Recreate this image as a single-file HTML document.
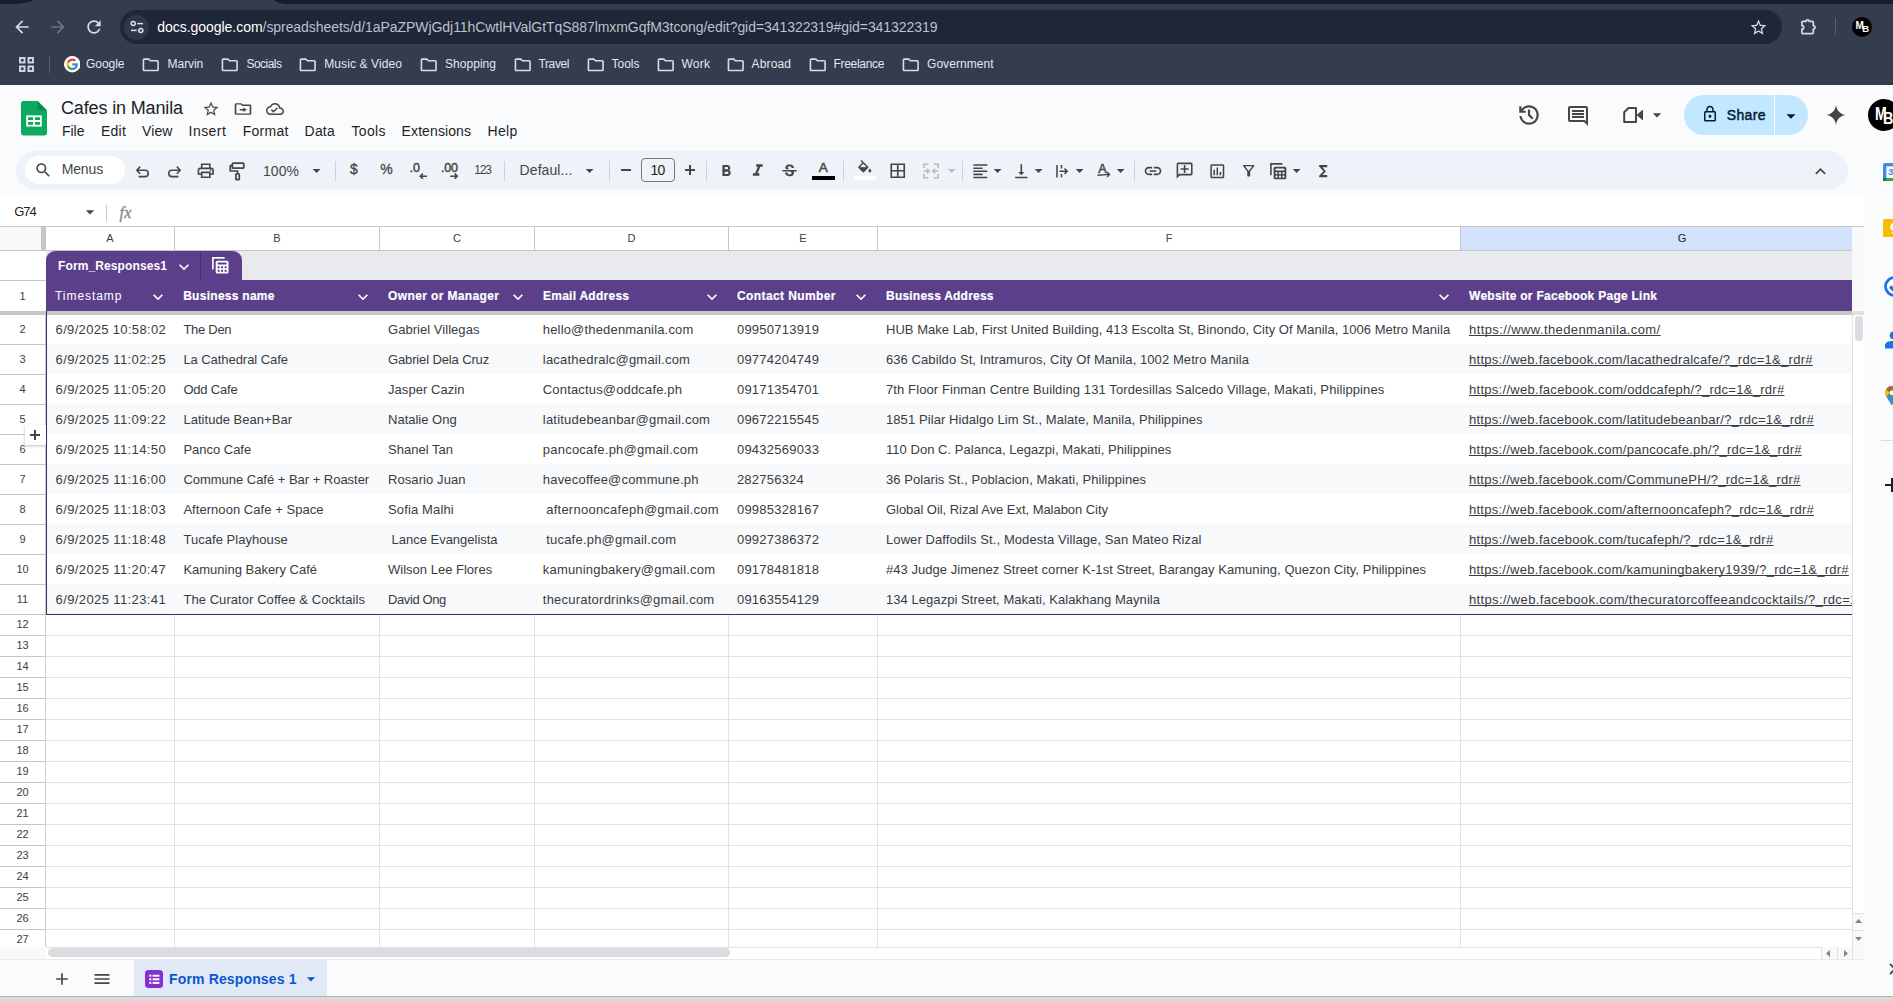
<!DOCTYPE html>
<html lang="en"><head><meta charset="utf-8"><title>Cafes in Manila - Google Sheets</title>
<style>
html,body{margin:0;padding:0}
body{width:1893px;height:1001px;overflow:hidden;position:relative;background:#f9fbfd;font-family:"Liberation Sans",sans-serif}
.t{position:absolute;white-space:nowrap}
svg{display:block}
a{color:inherit}
</style></head>
<body>
<!-- browser chrome -->
<div style="position:absolute;left:0px;top:0px;width:1893px;height:85px;background:#343c4d;"></div>
<div style="position:absolute;left:0px;top:80px;width:1893px;height:2px;background:#354156;"></div>
<div style="position:absolute;left:0px;top:82px;width:1893px;height:1px;background:#2f384a;"></div>
<div style="position:absolute;left:0px;top:83px;width:1893px;height:2px;background:#373b48;"></div>
<div style="position:absolute;left:0px;top:0px;width:1893px;height:4px;background:#171d2c;"></div>
<svg style="position:absolute;left:0;top:0" width="300" height="6" viewBox="0 0 300 6"><path fill="#343c4d" d="M0 6V4.6C14 4.6 27 3.4 34 0H274c3 2.6 7 4 14 4h12v2z"/></svg>
<svg style="position:absolute;left:12px;top:17px;" width="20" height="20" viewBox="0 0 24 24" ><path fill="#d6dbe4" d="M20 11H7.83l5.59-5.59L12 4l-8 8 8 8 1.41-1.41L7.83 13H20v-2z"/></svg>
<svg style="position:absolute;left:47.5px;top:17px;" width="20" height="20" viewBox="0 0 24 24" ><path fill="#6c7484" d="M12 4l-1.41 1.41L16.17 11H4v2h12.17l-5.58 5.59L12 20l8-8z"/></svg>
<svg style="position:absolute;left:84px;top:17px;" width="20" height="20" viewBox="0 0 24 24" ><path fill="#d6dbe4" d="M17.65 6.35C16.2 4.9 14.21 4 12 4c-4.42 0-7.99 3.58-7.99 8s3.57 8 7.99 8c3.73 0 6.84-2.55 7.73-6h-2.08c-.82 2.33-3.04 4-5.65 4-3.31 0-6-2.69-6-6s2.69-6 6-6c1.66 0 3.14.69 4.22 1.78L13 11h7V4l-2.35 2.35z"/></svg>
<div style="position:absolute;left:120px;top:10px;width:1662px;height:34px;background:#1f2637;border-radius:17px"></div>
<div style="position:absolute;left:124px;top:14.5px;width:25px;height:25px;background:#2f3749;border-radius:50%"></div>
<svg style="position:absolute;left:128.5px;top:19px" width="16" height="16" viewBox="0 0 16 16" fill="none" stroke="#dfe3ea" stroke-width="1.5"><circle cx="4.2" cy="4.6" r="2"/><path d="M8.3 4.6H14"/><circle cx="11.8" cy="11.4" r="2"/><path d="M2 11.4H7.7"/></svg>
<span class="t" id="turl" style="left:157.3px;top:17.6px;font-size:14px;line-height:18px;color:#bcc1cc;letter-spacing:-0.06px"><span style="color:#fff;letter-spacing:-0.04px">docs.google.com</span>/spreadsheets/d/1aPaZPWjGdj11hCwtlHValGtTqS887lmxmGqfM3tcong/edit?gid=341322319#gid=341322319</span>
<svg style="position:absolute;left:1749px;top:17.5px;" width="19" height="19" viewBox="0 0 24 24" ><path fill="#d6dbe4" d="M22 9.24l-7.19-.62L12 2 9.19 8.63 2 9.24l5.46 4.73L5.82 21 12 17.27 18.18 21l-1.63-7.03L22 9.24zM12 15.4l-3.76 2.27 1-4.28-3.32-2.88 4.38-.38L12 6.1l1.71 4.04 4.38.38-3.32 2.88 1 4.28L12 15.4z"/></svg>
<svg style="position:absolute;left:1800px;top:17.5px" width="18" height="17" viewBox="0 0 18 17" fill="none" stroke="#d6dbe4" stroke-width="1.7" stroke-linejoin="round"><path d="M1.9 4.4a1 1 0 0 1 1-1H6a1.6 1.6 0 0 1 3.2 0H12.3a1 1 0 0 1 1 1V7.6a1.7 1.7 0 0 1 0 3.4V14.6a1 1 0 0 1-1 1H2.9a1 1 0 0 1-1-1V11.2a1.8 1.8 0 0 0 0-3.6z"/></svg>
<div style="position:absolute;left:1834.5px;top:18px;width:1.5px;height:17px;background:#566076;"></div>
<div style="position:absolute;left:1852px;top:17px;width:20px;height:20px;background:#000;border-radius:50%"></div>
<span class="t" style="top:18.8px;font-size:10px;line-height:13px;color:#fff;font-weight:700;left:1855.5px;">M</span>
<span class="t" style="top:23.0px;font-size:9.5px;line-height:12px;color:#fff;font-weight:700;left:1862.3px;">B</span>
<svg style="position:absolute;left:18.5px;top:56.5px" width="15" height="15" viewBox="0 0 15 15" fill="none" stroke="#d6dbe4" stroke-width="1.9"><rect x="1" y="1" width="4.5" height="4.5"/><rect x="9.5" y="1" width="4.5" height="4.5"/><rect x="1" y="9.5" width="4.5" height="4.5"/><rect x="9.5" y="9.5" width="4.5" height="4.5"/></svg>
<div style="position:absolute;left:48.5px;top:56px;width:1px;height:17px;background:#566076;"></div>
<svg style="position:absolute;left:63.5px;top:56px" width="16.5" height="16.5" viewBox="0 0 48 48"><circle cx="24" cy="24" r="24" fill="#fff"/><g transform="translate(7 7) scale(.71)"><path fill="#EA4335" d="M24 9.5c3.54 0 6.71 1.22 9.21 3.6l6.85-6.85C35.9 2.38 30.47 0 24 0 14.62 0 6.51 5.38 2.56 13.22l7.98 6.19C12.43 13.72 17.74 9.5 24 9.5z"/><path fill="#4285F4" d="M46.98 24.55c0-1.57-.15-3.09-.38-4.55H24v9.02h12.94c-.58 2.96-2.26 5.48-4.78 7.18l7.73 6c4.51-4.18 7.09-10.36 7.09-17.65z"/><path fill="#FBBC05" d="M10.53 28.59c-.48-1.45-.76-2.99-.76-4.59s.27-3.14.76-4.59l-7.98-6.19C.92 16.46 0 20.12 0 24c0 3.88.92 7.54 2.56 10.78l7.97-6.19z"/><path fill="#34A853" d="M24 48c6.48 0 11.93-2.13 15.89-5.81l-7.73-6c-2.15 1.45-4.92 2.3-8.16 2.3-6.26 0-11.57-4.22-13.47-9.91l-7.98 6.19C6.51 42.62 14.62 48 24 48z"/></g></svg>
<span class="t" style="top:56.3px;font-size:12px;line-height:16px;color:#e3e7ee;letter-spacing:-0.042px;left:86px;">Google</span>
<svg style="position:absolute;left:141.3px;top:54.5px;" width="19.5" height="19.5" viewBox="0 0 24 24" ><path fill="#d6dbe4" d="M9.17 6l2 2H20v10H4V6h5.17M10 4H4c-1.1 0-1.99.9-1.99 2L2 18c0 1.1.9 2 2 2h16c1.1 0 2-.9 2-2V8c0-1.1-.9-2-2-2h-8l-2-2z"/></svg>
<span class="t" style="top:56.3px;font-size:12px;line-height:16px;color:#e3e7ee;letter-spacing:-0.062px;left:167.6px;">Marvin</span>
<svg style="position:absolute;left:220.3px;top:54.5px;" width="19.5" height="19.5" viewBox="0 0 24 24" ><path fill="#d6dbe4" d="M9.17 6l2 2H20v10H4V6h5.17M10 4H4c-1.1 0-1.99.9-1.99 2L2 18c0 1.1.9 2 2 2h16c1.1 0 2-.9 2-2V8c0-1.1-.9-2-2-2h-8l-2-2z"/></svg>
<span class="t" style="top:56.3px;font-size:12px;line-height:16px;color:#e3e7ee;letter-spacing:-0.516px;left:246.4px;">Socials</span>
<svg style="position:absolute;left:298.0px;top:54.5px;" width="19.5" height="19.5" viewBox="0 0 24 24" ><path fill="#d6dbe4" d="M9.17 6l2 2H20v10H4V6h5.17M10 4H4c-1.1 0-1.99.9-1.99 2L2 18c0 1.1.9 2 2 2h16c1.1 0 2-.9 2-2V8c0-1.1-.9-2-2-2h-8l-2-2z"/></svg>
<span class="t" style="top:56.3px;font-size:12px;line-height:16px;color:#e3e7ee;letter-spacing:0.109px;left:324.2px;">Music &amp; Video</span>
<svg style="position:absolute;left:419.1px;top:54.5px;" width="19.5" height="19.5" viewBox="0 0 24 24" ><path fill="#d6dbe4" d="M9.17 6l2 2H20v10H4V6h5.17M10 4H4c-1.1 0-1.99.9-1.99 2L2 18c0 1.1.9 2 2 2h16c1.1 0 2-.9 2-2V8c0-1.1-.9-2-2-2h-8l-2-2z"/></svg>
<span class="t" style="top:56.3px;font-size:12px;line-height:16px;color:#e3e7ee;letter-spacing:0.039px;left:445px;">Shopping</span>
<svg style="position:absolute;left:512.8px;top:54.5px;" width="19.5" height="19.5" viewBox="0 0 24 24" ><path fill="#d6dbe4" d="M9.17 6l2 2H20v10H4V6h5.17M10 4H4c-1.1 0-1.99.9-1.99 2L2 18c0 1.1.9 2 2 2h16c1.1 0 2-.9 2-2V8c0-1.1-.9-2-2-2h-8l-2-2z"/></svg>
<span class="t" style="top:56.3px;font-size:12px;line-height:16px;color:#e3e7ee;letter-spacing:-0.38px;left:538.5px;">Travel</span>
<svg style="position:absolute;left:585.8px;top:54.5px;" width="19.5" height="19.5" viewBox="0 0 24 24" ><path fill="#d6dbe4" d="M9.17 6l2 2H20v10H4V6h5.17M10 4H4c-1.1 0-1.99.9-1.99 2L2 18c0 1.1.9 2 2 2h16c1.1 0 2-.9 2-2V8c0-1.1-.9-2-2-2h-8l-2-2z"/></svg>
<span class="t" style="top:56.3px;font-size:12px;line-height:16px;color:#e3e7ee;letter-spacing:-0.006px;left:611.5px;">Tools</span>
<svg style="position:absolute;left:655.8px;top:54.5px;" width="19.5" height="19.5" viewBox="0 0 24 24" ><path fill="#d6dbe4" d="M9.17 6l2 2H20v10H4V6h5.17M10 4H4c-1.1 0-1.99.9-1.99 2L2 18c0 1.1.9 2 2 2h16c1.1 0 2-.9 2-2V8c0-1.1-.9-2-2-2h-8l-2-2z"/></svg>
<span class="t" style="top:56.3px;font-size:12px;line-height:16px;color:#e3e7ee;letter-spacing:0.235px;left:681.5px;">Work</span>
<svg style="position:absolute;left:725.8px;top:54.5px;" width="19.5" height="19.5" viewBox="0 0 24 24" ><path fill="#d6dbe4" d="M9.17 6l2 2H20v10H4V6h5.17M10 4H4c-1.1 0-1.99.9-1.99 2L2 18c0 1.1.9 2 2 2h16c1.1 0 2-.9 2-2V8c0-1.1-.9-2-2-2h-8l-2-2z"/></svg>
<span class="t" style="top:56.3px;font-size:12px;line-height:16px;color:#e3e7ee;letter-spacing:0.161px;left:751.5px;">Abroad</span>
<svg style="position:absolute;left:807.8px;top:54.5px;" width="19.5" height="19.5" viewBox="0 0 24 24" ><path fill="#d6dbe4" d="M9.17 6l2 2H20v10H4V6h5.17M10 4H4c-1.1 0-1.99.9-1.99 2L2 18c0 1.1.9 2 2 2h16c1.1 0 2-.9 2-2V8c0-1.1-.9-2-2-2h-8l-2-2z"/></svg>
<span class="t" style="top:56.3px;font-size:12px;line-height:16px;color:#e3e7ee;letter-spacing:-0.297px;left:833.5px;">Freelance</span>
<svg style="position:absolute;left:901.3px;top:54.5px;" width="19.5" height="19.5" viewBox="0 0 24 24" ><path fill="#d6dbe4" d="M9.17 6l2 2H20v10H4V6h5.17M10 4H4c-1.1 0-1.99.9-1.99 2L2 18c0 1.1.9 2 2 2h16c1.1 0 2-.9 2-2V8c0-1.1-.9-2-2-2h-8l-2-2z"/></svg>
<span class="t" style="top:56.3px;font-size:12px;line-height:16px;color:#e3e7ee;letter-spacing:0.051px;left:927px;">Government</span>
<!-- sheets header -->
<div style="position:absolute;left:0px;top:85px;width:1893px;height:1px;background:#ffffff;"></div>
<svg style="position:absolute;left:21px;top:101px" width="26" height="34.5" viewBox="0 0 26 34.5"><path fill="#0da960" d="M2.4 0H16.6L26 9.4V32.1A2.4 2.4 0 0 1 23.6 34.5H2.4A2.4 2.4 0 0 1 0 32.1V2.4A2.4 2.4 0 0 1 2.4 0z"/><path fill="#0a8a4c" d="M16.6 0L26 9.4H19A2.4 2.4 0 0 1 16.6 7z"/><path fill="#fff" d="M5.2 14.4H20.8V25.6H5.2z"/><path fill="#0da960" d="M7 16.2H12.1V19.1H7zM13.9 16.2H19V19.1H13.9zM7 20.9H12.1V23.8H7zM13.9 20.9H19V23.8H13.9z"/></svg>
<span class="t" style="top:96.5px;font-size:18px;line-height:23px;color:#1f1f1f;letter-spacing:-0.147px;left:61px;">Cafes in Manila</span>
<svg style="position:absolute;left:201.8px;top:99.7px;" width="18" height="18" viewBox="0 0 24 24" ><path fill="#444746" d="M22 9.24l-7.19-.62L12 2 9.19 8.63 2 9.24l5.46 4.73L5.82 21 12 17.27 18.18 21l-1.63-7.03L22 9.24zM12 15.4l-3.76 2.27 1-4.28-3.32-2.88 4.38-.38L12 6.1l1.71 4.04 4.38.38-3.32 2.88 1 4.28L12 15.4z"/></svg>
<svg style="position:absolute;left:233px;top:99px;transform:scaleY(.88)" width="20" height="20" viewBox="0 0 24 24" ><path fill="#444746" d="M20 6h-8l-2-2H4c-1.1 0-2 .9-2 2v12c0 1.1.9 2 2 2h16c1.1 0 2-.9 2-2V8c0-1.1-.9-2-2-2zm0 12H4V6h5.17l2 2H20v10zm-7.5-2l4-3-4-3v2H8v2h4.5v2z"/></svg>
<svg style="position:absolute;left:266px;top:100px;" width="18" height="18" viewBox="0 0 24 24" ><path fill="#444746" d="M19.35 10.04C18.67 6.59 15.64 4 12 4 9.11 4 6.6 5.64 5.35 8.04 2.34 8.36 0 10.91 0 14c0 3.31 2.69 6 6 6h13c2.76 0 5-2.24 5-5 0-2.64-2.05-4.78-4.65-4.96zM19 18H6c-2.21 0-4-1.79-4-4 0-2.05 1.53-3.76 3.56-3.97l1.07-.11.5-.95C8.08 7.14 9.94 6 12 6c2.62 0 4.88 1.86 5.39 4.43l.3 1.5 1.53.11c1.56.1 2.78 1.41 2.78 2.96 0 1.65-1.35 3-3 3zm-9-3.82l-2.09-2.09L6.5 13.5 10 17l6.01-6.01-1.41-1.41z"/></svg>
<span class="t" style="top:122.30000000000001px;font-size:14px;line-height:18px;color:#1f1f1f;letter-spacing:-0.02px;left:62px;">File</span>
<span class="t" style="top:122.30000000000001px;font-size:14px;line-height:18px;color:#1f1f1f;letter-spacing:0.22px;left:101px;">Edit</span>
<span class="t" style="top:122.30000000000001px;font-size:14px;line-height:18px;color:#1f1f1f;letter-spacing:0.099px;left:142px;">View</span>
<span class="t" style="top:122.30000000000001px;font-size:14px;line-height:18px;color:#1f1f1f;letter-spacing:0.435px;left:188.6px;">Insert</span>
<span class="t" style="top:122.30000000000001px;font-size:14px;line-height:18px;color:#1f1f1f;letter-spacing:0.271px;left:242.7px;">Format</span>
<span class="t" style="top:122.30000000000001px;font-size:14px;line-height:18px;color:#1f1f1f;letter-spacing:0.172px;left:304.6px;">Data</span>
<span class="t" style="top:122.30000000000001px;font-size:14px;line-height:18px;color:#1f1f1f;letter-spacing:0.278px;left:351.6px;">Tools</span>
<span class="t" style="top:122.30000000000001px;font-size:14px;line-height:18px;color:#1f1f1f;letter-spacing:0.1px;left:401.6px;">Extensions</span>
<span class="t" style="top:122.30000000000001px;font-size:14px;line-height:18px;color:#1f1f1f;letter-spacing:0.301px;left:487.5px;">Help</span>
<svg style="position:absolute;left:1515.8px;top:101.7px" width="26" height="26" viewBox="0 -960 960 960"><path fill="#444746" d="M480-120q-138 0-240.500-91.500T122-440h82q14 104 92.5 172T480-200q117 0 198.500-81.500T760-480q0-117-81.500-198.500T480-760q-69 0-129 32t-101 88h110v80H120v-240h80v94q51-64 124.500-99T480-840q75 0 140.500 28.500t114 77q48.500 48.500 77 114T840-480q0 75-28.500 140.500t-77 114q-48.500 48.500-114 77T480-120Zm112-192L440-464v-216h80v184l128 128-56 56Z"/></svg>
<svg style="position:absolute;left:1566px;top:104px;" width="24" height="24" viewBox="0 0 24 24" ><path fill="#444746" d="M21.99 4c0-1.1-.89-2-1.99-2H4c-1.1 0-2 .9-2 2v12c0 1.1.9 2 2 2h14l4 4-.01-18zM20 4v13.17L18.83 16H4V4h16zM6 12h12v2H6zm0-3h12v2H6zm0-3h12v2H6z"/></svg>
<svg style="position:absolute;left:1622px;top:106px" width="22" height="18" viewBox="0 0 22 18" fill="none" stroke="#444746" stroke-width="2" stroke-linejoin="round"><path d="M6.5 2H14V16H2.2V6.3z"/><path fill="#444746" stroke="none" d="M14.5 9L21 3.5V14.5z"/></svg>
<svg style="position:absolute;left:1647px;top:104.6px;" width="20" height="20" viewBox="0 0 24 24" ><path fill="#444746" d="M7 10l5 5 5-5z"/></svg>
<div style="position:absolute;left:1684px;top:95px;width:124px;height:40px;background:#c2e7ff;border-radius:20px"></div>
<div style="position:absolute;left:1774px;top:95px;width:1px;height:40px;background:#f9fbfd;"></div>
<svg style="position:absolute;left:1701px;top:105px;" width="18" height="18" viewBox="0 0 24 24" ><path fill="#001d35" d="M18 8h-1V6c0-2.76-2.24-5-5-5S7 3.24 7 6v2H6c-1.1 0-2 .9-2 2v10c0 1.1.9 2 2 2h12c1.1 0 2-.9 2-2V10c0-1.1-.9-2-2-2zM9 6c0-1.66 1.34-3 3-3s3 1.34 3 3v2H9V6zm9 14H6V10h12v10zm-6-3c1.1 0 2-.9 2-2s-.9-2-2-2-2 .9-2 2 .9 2 2 2z"/></svg>
<span class="t" style="top:106.0px;font-size:14px;line-height:18px;color:#001d35;letter-spacing:0.357px;-webkit-text-stroke:0.45px #001d35;left:1726.7px;">Share</span>
<svg style="position:absolute;left:1780.2px;top:104.8px;" width="22" height="22" viewBox="0 0 24 24" ><path fill="#001d35" d="M7 10l5 5 5-5z"/></svg>
<svg style="position:absolute;left:1826px;top:105px" width="20" height="20" viewBox="0 0 20 20"><path fill="#444746" d="M10 0C10.6 5.6 14.4 9.4 20 10C14.4 10.6 10.6 14.4 10 20C9.4 14.4 5.6 10.6 0 10C5.6 9.4 9.4 5.6 10 0z"/></svg>
<div style="position:absolute;left:1868px;top:99px;width:32px;height:32px;background:#000;border-radius:50%"></div>
<span class="t" style="top:101.3px;font-size:19px;line-height:25px;color:#fff;font-weight:700;transform:scaleX(.74);transform-origin:left center;left:1874.8px;">M</span>
<span class="t" style="top:107.6px;font-size:17px;line-height:22px;color:#fff;font-weight:700;transform:scaleX(.85);transform-origin:left center;left:1882.6px;">B</span>
<!-- toolbar -->
<div style="position:absolute;left:16px;top:151px;width:1832px;height:39px;background:#eef2f9;border-radius:20px"></div>
<div style="position:absolute;left:25px;top:156px;width:100px;height:28px;background:#fff;border-radius:14px"></div>
<svg style="position:absolute;left:33.5px;top:161px;" width="18.5" height="18.5" viewBox="0 0 24 24" ><path fill="#444746" d="M15.5 14h-.79l-.28-.27C15.41 12.59 16 11.11 16 9.5 16 5.91 13.09 3 9.5 3S3 5.91 3 9.5 5.91 16 9.5 16c1.61 0 3.09-.59 4.23-1.57l.27.28v.79l5 4.99L20.49 19l-4.99-5zm-6 0C7.01 14 5 11.99 5 9.5S7.01 5 9.5 5 14 7.01 14 9.5 11.99 14 9.5 14z"/></svg>
<span class="t" style="top:160.2px;font-size:14px;line-height:18px;color:#444746;letter-spacing:-0.131px;left:61.7px;">Menus</span>
<svg style="position:absolute;left:134.6px;top:164px" width="16" height="16" viewBox="0 0 16 16" fill="none" stroke="#444746" stroke-width="1.6" stroke-linejoin="round"><path d="M5.2 2.6L1.8 6.2L5.2 9.8"/><path d="M2.2 6.2H10a3.2 3.2 0 0 1 0 6.4H3.6"/></svg>
<svg style="position:absolute;left:166.2px;top:164px" width="16" height="16" viewBox="0 0 16 16" fill="none" stroke="#444746" stroke-width="1.6" stroke-linejoin="round"><path d="M10.8 2.6L14.2 6.2L10.8 9.8"/><path d="M13.8 6.2H6a3.2 3.2 0 0 0 0 6.4H12.4"/></svg>
<svg style="position:absolute;left:196.25px;top:161.25px;" width="19.5" height="19.5" viewBox="0 0 24 24" ><path fill="#444746" d="M19 8h-1V3H6v5H5c-1.66 0-3 1.34-3 3v6h4v4h12v-4h4v-6c0-1.66-1.34-3-3-3zM8 5h8v3H8V5zm8 12v2H8v-4h8v2zm2-2v-2H6v2H4v-4c0-.55.45-1 1-1h14c.55 0 1 .45 1 1v4h-2z M18 10.5a1 1 0 1 0 0 2 1 1 0 0 0 0-2z"/></svg>
<svg style="position:absolute;left:229.3px;top:162.3px" width="16" height="19" viewBox="0 0 16 19" fill="none" stroke="#444746" stroke-width="1.7" stroke-linejoin="round"><rect x="3.4" y="1.2" width="11.4" height="5" rx=".8"/><path d="M3.4 3.7H1.3V9H8.6V12"/><rect x="6.9" y="12" width="3.4" height="5.6" rx=".5"/></svg>
<span class="t" style="top:162.3px;font-size:14px;line-height:18px;color:#444746;letter-spacing:0.062px;left:263px;">100%</span>
<svg style="position:absolute;left:307.0px;top:160.9px;" width="19.2" height="19.2" viewBox="0 0 24 24" ><path fill="#444746" d="M7 10l5 5 5-5z"/></svg>
<div style="position:absolute;left:334.5px;top:161px;width:1px;height:20px;background:#cdd0d6;"></div>
<span class="t" style="top:160.3px;font-size:14px;line-height:18px;color:#444746;letter-spacing:-0.099px;-webkit-text-stroke:0.3px #444746;left:350px;">$</span>
<span class="t" style="top:160.3px;font-size:14px;line-height:18px;color:#444746;letter-spacing:-1.256px;-webkit-text-stroke:0.3px #444746;left:380.3px;">%</span>
<span class="t" style="top:160.0px;font-size:12.5px;line-height:16px;color:#444746;letter-spacing:0.062px;-webkit-text-stroke:0.45px #444746;left:409.5px;">.0</span>
<svg style="position:absolute;left:418.5px;top:172.6px" width="8.5" height="6.5" viewBox="0 0 8.5 6.5" fill="none" stroke="#444746" stroke-width="1.6"><path d="M8.3 3.2H1.4M3.9 .7L1.3 3.2L3.9 5.8"/></svg>
<span class="t" style="top:160.0px;font-size:12.5px;line-height:16px;color:#444746;letter-spacing:-0.192px;-webkit-text-stroke:0.45px #444746;left:441px;">.00</span>
<svg style="position:absolute;left:449.5px;top:172.6px" width="8.5" height="6.5" viewBox="0 0 8.5 6.5" fill="none" stroke="#444746" stroke-width="1.6"><path d="M.2 3.2H7.1M4.6 .7L7.2 3.2L4.6 5.8"/></svg>
<span class="t" style="top:161.6px;font-size:12px;line-height:16px;color:#444746;letter-spacing:-1.212px;left:474.3px;">123</span>
<div style="position:absolute;left:503.5px;top:161px;width:1px;height:20px;background:#cdd0d6;"></div>
<span class="t" style="top:161.2px;font-size:14px;line-height:18px;color:#444746;letter-spacing:0.069px;left:519.6px;">Defaul...</span>
<svg style="position:absolute;left:580.0px;top:160.9px;" width="19.2" height="19.2" viewBox="0 0 24 24" ><path fill="#444746" d="M7 10l5 5 5-5z"/></svg>
<div style="position:absolute;left:609px;top:161px;width:1px;height:20px;background:#cdd0d6;"></div>
<div style="position:absolute;left:621px;top:169px;width:10px;height:1.7px;background:#444746;"></div>
<div style="position:absolute;left:641px;top:158px;width:32px;height:22px;background:transparent;border:1px solid #747775;border-radius:4px"></div>
<span class="t" style="top:161.1px;font-size:14px;line-height:18px;color:#1f1f1f;letter-spacing:-0.578px;left:657.6px;transform:translateX(-50%);">10</span>
<div style="position:absolute;left:685px;top:169.2px;width:10px;height:1.7px;background:#444746;"></div>
<div style="position:absolute;left:689.15px;top:165px;width:1.7px;height:10px;background:#444746;"></div>
<div style="position:absolute;left:706px;top:161px;width:1px;height:20px;background:#cdd0d6;"></div>
<svg style="position:absolute;left:716.75px;top:161.55px;" width="18.5" height="18.5" viewBox="0 0 24 24" ><path fill="#444746" d="M15.6 10.79c.97-.67 1.65-1.77 1.65-2.79 0-2.26-1.75-4-4-4H7v14h7.04c2.09 0 3.71-1.7 3.71-3.79 0-1.52-.86-2.82-2.15-3.42zM10 6.5h3c.83 0 1.5.67 1.5 1.5s-.67 1.5-1.5 1.5h-3v-3zm3.5 9H10v-3h3.5c.83 0 1.5.67 1.5 1.5s-.67 1.5-1.5 1.5z"/></svg>
<svg style="position:absolute;left:748.25px;top:161.25px;" width="19.5" height="19.5" viewBox="0 0 24 24" ><path fill="#444746" d="M10 4v3h2.21l-3.42 8H6v3h8v-3h-2.21l3.42-8H18V4z"/></svg>
<svg style="position:absolute;left:780.3px;top:161.5px;" width="19" height="19" viewBox="0 0 24 24" ><path fill="#444746" d="M7.24 8.75c-.26-.48-.39-1.03-.39-1.67 0-.61.13-1.16.4-1.67.26-.5.63-.93 1.11-1.29.48-.35 1.05-.63 1.7-.83.66-.19 1.39-.29 2.18-.29.81 0 1.54.11 2.21.34.66.22 1.23.54 1.69.94.47.4.83.88 1.08 1.43.25.55.38 1.15.38 1.81h-3.01c0-.31-.05-.59-.15-.85-.09-.27-.24-.49-.44-.68-.2-.19-.45-.33-.75-.44-.3-.1-.66-.16-1.06-.16-.39 0-.74.04-1.03.13-.29.09-.53.21-.72.36-.19.16-.34.34-.44.55-.1.21-.15.43-.15.66 0 .48.25.88.74 1.21.38.25.77.48 1.41.7H7.39c-.05-.08-.11-.17-.15-.25zM21 12v-2H3v2h9.62c.18.07.4.14.55.2.37.17.66.34.87.51.21.17.35.36.43.57.07.2.11.43.11.69 0 .23-.05.45-.14.66-.09.2-.23.38-.42.53-.19.15-.42.26-.71.35-.29.08-.63.13-1.01.13-.43 0-.83-.04-1.18-.13s-.66-.23-.91-.42c-.25-.19-.45-.44-.59-.75-.14-.31-.25-.76-.25-1.21H6.4c0 .55.08 1.13.24 1.58.16.45.37.85.65 1.21.28.35.6.66.98.92.37.26.78.48 1.22.65.44.17.9.3 1.38.39.48.08.96.13 1.44.13.8 0 1.53-.09 2.18-.28s1.21-.45 1.67-.79c.46-.34.82-.77 1.07-1.27s.38-1.07.38-1.71c0-.6-.1-1.14-.31-1.61-.05-.11-.11-.23-.17-.33H21z"/></svg>
<span class="t" style="top:159.2px;font-size:13.5px;line-height:18px;color:#444746;-webkit-text-stroke:0.5px #444746;left:823.3px;transform:translateX(-50%);">A</span>
<div style="position:absolute;left:812px;top:176px;width:23px;height:4px;background:#000;"></div>
<div style="position:absolute;left:843px;top:161px;width:1px;height:20px;background:#cdd0d6;"></div>
<svg style="position:absolute;left:855.5px;top:159.5px;" width="17.5" height="17.5" viewBox="0 0 24 24" ><path fill="#444746" d="M16.56 8.94L7.62 0 6.21 1.41l2.38 2.38-5.15 5.15c-.59.59-.59 1.54 0 2.12l5.5 5.5c.29.29.68.44 1.06.44s.77-.15 1.06-.44l5.5-5.5c.59-.58.59-1.53 0-2.12zM5.21 10L10 5.21 14.79 10H5.21zM19 11.5s-2 2.17-2 3.5c0 1.1.9 2 2 2s2-.9 2-2c0-1.33-2-3.5-2-3.5z"/></svg>
<svg style="position:absolute;left:855.5px;top:159.5px" width="17.5" height="17.5" viewBox="0 0 24 24"><path fill="#444746" d="M4.4 10.4h11.2L10 16z"/></svg>
<div style="position:absolute;left:853.5px;top:176px;width:22.5px;height:4px;background:#fff;"></div>
<svg style="position:absolute;left:888.25px;top:161.25px;" width="19.5" height="19.5" viewBox="0 0 24 24" ><path fill="#444746" d="M3 3v18h18V3H3zm8 16H5v-6h6v6zm0-8H5V5h6v6zm8 8h-6v-6h6v6zm0-8h-6V5h6v6z"/></svg>
<svg style="position:absolute;left:923px;top:163px" width="16" height="16" viewBox="0 0 16 16" fill="none" stroke="#b9bcbb" stroke-width="1.6"><path d="M.8 5V1.2H5.4M10.6 1.2H15.2V5M15.2 11V14.8H10.6M5.4 14.8H.8V11"/><path d="M.8 8H6M4 5.8L6.2 8L4 10.2M15.2 8H10M12 5.8L9.8 8L12 10.2"/></svg>
<svg style="position:absolute;left:942.4px;top:160.9px;" width="19.2" height="19.2" viewBox="0 0 24 24" ><path fill="#b9bcbb" d="M7 10l5 5 5-5z"/></svg>
<div style="position:absolute;left:962px;top:161px;width:1px;height:20px;background:#cdd0d6;"></div>
<svg style="position:absolute;left:970.7px;top:161.89999999999998px;" width="18.6" height="18.6" viewBox="0 0 24 24" ><path fill="#444746" d="M15 15H3v2h12v-2zm0-8H3v2h12V7zM3 13h18v-2H3v2zm0 8h18v-2H3v2zM3 3v2h18V3H3z"/></svg>
<svg style="position:absolute;left:988.4px;top:160.9px;" width="19.2" height="19.2" viewBox="0 0 24 24" ><path fill="#444746" d="M7 10l5 5 5-5z"/></svg>
<svg style="position:absolute;left:1011.7px;top:161.89999999999998px;" width="18.6" height="18.6" viewBox="0 0 24 24" ><path fill="#444746" d="M16 13h-3V3h-2v10H8l4 4 4-4zM4 19v2h16v-2H4z"/></svg>
<svg style="position:absolute;left:1029.2px;top:160.9px;" width="19.2" height="19.2" viewBox="0 0 24 24" ><path fill="#444746" d="M7 10l5 5 5-5z"/></svg>
<svg style="position:absolute;left:1054.6px;top:163.9px" width="14.4" height="14.4" viewBox="0 0 16 16" fill="none" stroke="#444746" stroke-width="1.7"><path d="M2.2 1V15M7.2 1V5M7.2 11V15"/><path d="M5 8H13.4M10.6 5L13.6 8L10.6 11" /></svg>
<svg style="position:absolute;left:1070.4px;top:160.9px;" width="19.2" height="19.2" viewBox="0 0 24 24" ><path fill="#444746" d="M7 10l5 5 5-5z"/></svg>
<span class="t" style="top:161.2px;font-size:12.5px;line-height:16px;color:#444746;-webkit-text-stroke:0.5px #444746;left:1102.5px;transform:translateX(-50%);">A</span>
<svg style="position:absolute;left:1096.5px;top:171.3px" width="14" height="7.5" viewBox="0 0 15 8" fill="none" stroke="#444746" stroke-width="1.5"><path d="M.5 4.6L13 3.6M10.4 1.2L13.4 3.6L10.8 6.4"/></svg>
<svg style="position:absolute;left:1111.4px;top:160.9px;" width="19.2" height="19.2" viewBox="0 0 24 24" ><path fill="#444746" d="M7 10l5 5 5-5z"/></svg>
<div style="position:absolute;left:1133.5px;top:161px;width:1px;height:20px;background:#cdd0d6;"></div>
<svg style="position:absolute;left:1142.8px;top:161.0px;" width="20" height="20" viewBox="0 0 24 24" ><path fill="#444746" d="M3.9 12c0-1.71 1.39-3.1 3.1-3.1h4V7H7c-2.76 0-5 2.24-5 5s2.24 5 5 5h4v-1.9H7c-1.71 0-3.1-1.39-3.1-3.1zM8 13h8v-2H8v2zm9-6h-4v1.9h4c1.71 0 3.1 1.39 3.1 3.1s-1.39 3.1-3.1 3.1h-4V17h4c2.76 0 5-2.24 5-5s-2.24-5-5-5z"/></svg>
<svg style="position:absolute;left:1175.4px;top:161.1px;transform:scaleX(-1)" width="19.2" height="19.2" viewBox="0 0 24 24" ><path fill="#444746" d="M22 4c0-1.1-.9-2-2-2H4c-1.1 0-2 .9-2 2v12c0 1.1.9 2 2 2h14l4 4V4zm-2 13.17L18.83 16H4V4h16v13.17zM13 5h-2v4H7v2h4v4h2v-4h4V9h-4z"/></svg>
<svg style="position:absolute;left:1207.7px;top:161.6px;" width="18.6" height="18.6" viewBox="0 0 24 24" ><path fill="#444746" d="M9 17H7v-7h2v7zm4 0h-2V7h2v10zm4 0h-2v-4h2v4zm2 2H5V5h14v14zm0-16H5c-1.1 0-2 .9-2 2v14c0 1.1.9 2 2 2h14c1.1 0 2-.9 2-2V5c0-1.1-.9-2-2-2z"/></svg>
<svg style="position:absolute;left:1240.3px;top:162.20000000000002px;" width="17.4" height="17.4" viewBox="0 0 24 24" ><path fill="#444746" d="M7 6h10l-5.01 6.3L7 6zm-2.75-.39C6.27 8.2 10 13 10 13v6c0 .55.45 1 1 1h2c.55 0 1-.45 1-1v-6s3.72-4.8 5.74-7.39c.51-.66.04-1.61-.79-1.61H5.04c-.83 0-1.3.95-.79 1.61z"/></svg>
<svg style="position:absolute;left:1270.3px;top:162.9px" width="16.8" height="16.8" viewBox="0 0 17 17"><path d="M.9 12.4V.9H12.6" fill="none" stroke="#444746" stroke-width="1.6"/><rect x="3.7" y="3.7" width="12.8" height="12.8" rx="1.6" fill="#444746"/><g fill="#eef2f9"><rect x="5.6" y="5.6" width="9" height="1.9" rx=".5"/><rect x="5.6" y="9.3" width="2" height="2"/><rect x="9.1" y="9.3" width="2" height="2"/><rect x="12.6" y="9.3" width="2" height="2"/><rect x="5.6" y="12.8" width="2" height="2"/><rect x="9.1" y="12.8" width="2" height="2"/><rect x="12.6" y="12.8" width="2" height="2"/></g></svg>
<svg style="position:absolute;left:1287.4px;top:160.9px;" width="19.2" height="19.2" viewBox="0 0 24 24" ><path fill="#444746" d="M7 10l5 5 5-5z"/></svg>
<svg style="position:absolute;left:1313.6px;top:161.9px;transform:scaleX(.88)" width="18.4" height="18.4" viewBox="0 0 24 24" ><path fill="#444746" d="M18 4H6v2l6.5 6L6 18v2h12v-3h-7l5-5-5-5h7z"/></svg>
<svg style="position:absolute;left:1809.5px;top:161.0px;" width="21" height="21" viewBox="0 0 24 24" ><path fill="#444746" d="M7.41 15.41L12 10.83l4.59 4.58L18 14l-6-6-6 6z"/></svg>
<div style="position:absolute;left:0px;top:197px;width:1864px;height:29px;background:#fff;"></div>
<span class="t" style="top:203.3px;font-size:13px;line-height:17px;color:#1f1f1f;letter-spacing:-1.038px;left:14.2px;">G74</span>
<svg style="position:absolute;left:79.7px;top:201.5px;" width="20" height="20" viewBox="0 0 24 24" ><path fill="#444746" d="M7 10l5 5 5-5z"/></svg>
<div style="position:absolute;left:106px;top:204.5px;width:1px;height:16px;background:#c7c7c7;"></div>
<span class="t" style="top:201.5px;font-size:16px;line-height:21px;color:#85898e;font-style:italic;font-family:'Liberation Serif',serif;letter-spacing:0.2px;-webkit-text-stroke:0.35px #85898e;left:119.5px;">fx</span>
<!-- grid -->
<div style="position:absolute;left:0px;top:226px;width:1864px;height:733px;background:#fff;"></div>
<div style="position:absolute;left:0px;top:226px;width:1864px;height:1px;background:#c4c7c5;"></div>
<div style="position:absolute;left:0px;top:227px;width:41px;height:23px;background:#f8f9fa;"></div>
<div style="position:absolute;left:41px;top:226px;width:5px;height:25px;background:#c4c7c5;"></div>
<div style="position:absolute;left:1461px;top:227px;width:391px;height:23px;background:#d3e3fd;"></div>
<div style="position:absolute;left:46px;top:250px;width:1806px;height:1px;background:#c4c7c5;"></div>
<div style="position:absolute;left:0px;top:250px;width:41px;height:1px;background:#c4c7c5;"></div>
<div style="position:absolute;left:174px;top:227px;width:1px;height:23px;background:#c4c7c5;"></div>
<div style="position:absolute;left:379px;top:227px;width:1px;height:23px;background:#c4c7c5;"></div>
<div style="position:absolute;left:534px;top:227px;width:1px;height:23px;background:#c4c7c5;"></div>
<div style="position:absolute;left:728px;top:227px;width:1px;height:23px;background:#c4c7c5;"></div>
<div style="position:absolute;left:877px;top:227px;width:1px;height:23px;background:#c4c7c5;"></div>
<div style="position:absolute;left:1460px;top:227px;width:1px;height:23px;background:#c4c7c5;"></div>
<div style="position:absolute;left:1852px;top:227px;width:12px;height:84px;background:#f8f9fa;"></div>
<span class="t" style="top:230.7px;font-size:11px;line-height:14px;color:#3c4043;left:110.0px;transform:translateX(-50%);">A</span>
<span class="t" style="top:230.7px;font-size:11px;line-height:14px;color:#3c4043;left:277.0px;transform:translateX(-50%);">B</span>
<span class="t" style="top:230.7px;font-size:11px;line-height:14px;color:#3c4043;left:457.0px;transform:translateX(-50%);">C</span>
<span class="t" style="top:230.7px;font-size:11px;line-height:14px;color:#3c4043;left:631.5px;transform:translateX(-50%);">D</span>
<span class="t" style="top:230.7px;font-size:11px;line-height:14px;color:#3c4043;left:803.0px;transform:translateX(-50%);">E</span>
<span class="t" style="top:230.7px;font-size:11px;line-height:14px;color:#3c4043;left:1169.0px;transform:translateX(-50%);">F</span>
<span class="t" style="top:230.7px;font-size:11px;line-height:14px;color:#202124;left:1682px;transform:translateX(-50%);">G</span>
<div style="position:absolute;left:45px;top:315px;width:1px;height:632px;background:#cdcdcd;"></div>
<div style="position:absolute;left:46px;top:251px;width:1806px;height:29px;background:#e8eaed;"></div>
<div style="position:absolute;left:0px;top:280px;width:46px;height:1px;background:#c4c7c5;"></div>
<div style="position:absolute;left:46px;top:251px;width:196px;height:30px;background:#5b3f8a;border-radius:9px 9px 0 0"></div>
<span class="t" style="top:257.8px;font-size:12px;line-height:16px;color:#fff;font-weight:700;letter-spacing:0.115px;left:58px;">Form_Responses1</span>
<svg style="position:absolute;left:174px;top:257px;" width="20" height="20" viewBox="0 0 24 24" ><path fill="#fff" d="M16.59 8.59L12 13.17 7.41 8.59 6 10l6 6 6-6z"/></svg>
<div style="position:absolute;left:200px;top:251px;width:1px;height:29px;background:#4a3074;"></div>
<div style="position:absolute;left:46px;top:280px;width:196px;height:1px;background:#50377c;"></div>
<svg style="position:absolute;left:212.2px;top:257.2px" width="17" height="17" viewBox="0 0 17 17"><path d="M.9 12.4V.9H12.6" fill="none" stroke="#fff" stroke-width="1.6"/><rect x="3.7" y="3.7" width="12.8" height="12.8" rx="1.6" fill="#fff"/><g fill="#5b3f8a"><rect x="5.6" y="5.6" width="9" height="1.9" rx=".5"/><rect x="5.6" y="9.3" width="2" height="2"/><rect x="9.1" y="9.3" width="2" height="2"/><rect x="12.6" y="9.3" width="2" height="2"/><rect x="5.6" y="12.8" width="2" height="2"/><rect x="9.1" y="12.8" width="2" height="2"/><rect x="12.6" y="12.8" width="2" height="2"/></g></svg>
<div style="position:absolute;left:46px;top:280px;width:1806px;height:31px;background:#5b3f8a;"></div>
<span class="t" style="top:287.6px;font-size:12px;line-height:16px;color:#fff;letter-spacing:0.949px;left:55px;">Timestamp</span>
<svg style="position:absolute;left:148.1px;top:286.6px;" width="20" height="20" viewBox="0 0 24 24" ><path fill="#fff" d="M16.59 8.59L12 13.17 7.41 8.59 6 10l6 6 6-6z"/></svg>
<span class="t" style="top:287.6px;font-size:12px;line-height:16px;color:#fff;font-weight:700;letter-spacing:0.271px;-webkit-text-stroke:0.2px #fff;left:183.2px;">Business name</span>
<svg style="position:absolute;left:353.1px;top:286.6px;" width="20" height="20" viewBox="0 0 24 24" ><path fill="#fff" d="M16.59 8.59L12 13.17 7.41 8.59 6 10l6 6 6-6z"/></svg>
<span class="t" style="top:287.6px;font-size:12px;line-height:16px;color:#fff;font-weight:700;letter-spacing:0.376px;-webkit-text-stroke:0.2px #fff;left:388px;">Owner or Manager</span>
<svg style="position:absolute;left:508.1px;top:286.6px;" width="20" height="20" viewBox="0 0 24 24" ><path fill="#fff" d="M16.59 8.59L12 13.17 7.41 8.59 6 10l6 6 6-6z"/></svg>
<span class="t" style="top:287.6px;font-size:12px;line-height:16px;color:#fff;font-weight:700;letter-spacing:0.257px;-webkit-text-stroke:0.2px #fff;left:543px;">Email Address</span>
<svg style="position:absolute;left:702.3px;top:286.6px;" width="20" height="20" viewBox="0 0 24 24" ><path fill="#fff" d="M16.59 8.59L12 13.17 7.41 8.59 6 10l6 6 6-6z"/></svg>
<span class="t" style="top:287.6px;font-size:12px;line-height:16px;color:#fff;font-weight:700;letter-spacing:0.396px;-webkit-text-stroke:0.2px #fff;left:737px;">Contact Number</span>
<svg style="position:absolute;left:851.3px;top:286.6px;" width="20" height="20" viewBox="0 0 24 24" ><path fill="#fff" d="M16.59 8.59L12 13.17 7.41 8.59 6 10l6 6 6-6z"/></svg>
<span class="t" style="top:287.6px;font-size:12px;line-height:16px;color:#fff;font-weight:700;letter-spacing:0.216px;-webkit-text-stroke:0.2px #fff;left:886px;">Business Address</span>
<svg style="position:absolute;left:1434.2px;top:286.6px;" width="20" height="20" viewBox="0 0 24 24" ><path fill="#fff" d="M16.59 8.59L12 13.17 7.41 8.59 6 10l6 6 6-6z"/></svg>
<span class="t" style="top:287.6px;font-size:12px;line-height:16px;color:#fff;font-weight:700;letter-spacing:0.268px;-webkit-text-stroke:0.2px #fff;left:1469px;">Website or Facebook Page Link</span>
<span class="t" style="top:288.5px;font-size:11px;line-height:14px;color:#3c4043;left:22.5px;transform:translateX(-50%);">1</span>
<div style="position:absolute;left:0px;top:311px;width:1864px;height:4px;background:#c4c7c5;"></div>
<div style="position:absolute;left:1852px;top:311px;width:12px;height:4px;background:#dfe1e5;"></div>
<div style="position:absolute;left:0;top:0;width:1852px;height:947px;overflow:hidden">
<div style="position:absolute;left:0px;top:344px;width:45px;height:1px;background:#c4c7c5;"></div>
<span class="t" style="top:322.3px;font-size:11px;line-height:14px;color:#3c4043;left:22.5px;transform:translateX(-50%);">2</span>
<span class="t" style="top:320.8px;font-size:13px;line-height:17px;color:#3a3c3f;letter-spacing:0.329px;left:55.6px;">6/9/2025 10:58:02</span>
<span class="t" style="top:320.8px;font-size:13px;line-height:17px;color:#3a3c3f;letter-spacing:-0.279px;left:183.4px;">The Den</span>
<span class="t" style="top:320.8px;font-size:13px;line-height:17px;color:#3a3c3f;letter-spacing:0.039px;left:388px;">Gabriel Villegas</span>
<span class="t" style="top:320.8px;font-size:13px;line-height:17px;color:#3a3c3f;letter-spacing:0.172px;left:542.8px;">hello@thedenmanila.com</span>
<span class="t" style="top:320.8px;font-size:13px;line-height:17px;color:#3a3c3f;letter-spacing:0.257px;left:736.9px;">09950713919</span>
<span class="t" style="top:320.8px;font-size:13px;line-height:17px;color:#3a3c3f;letter-spacing:0.029px;left:886px;">HUB Make Lab, First United Building, 413 Escolta St, Binondo, City Of Manila, 1006 Metro Manila</span>
<span class="t" style="top:320.8px;font-size:13px;line-height:17px;color:#3a3c3f;letter-spacing:0.403px;text-decoration:underline;text-underline-offset:1.4px;text-decoration-skip-ink:none;text-decoration-thickness:1px;left:1469px;">https://www.thedenmanila.com/</span>
<div style="position:absolute;left:47px;top:344px;width:1805px;height:30px;background:#f8f9fb;"></div>
<div style="position:absolute;left:0px;top:374px;width:45px;height:1px;background:#c4c7c5;"></div>
<span class="t" style="top:352.3px;font-size:11px;line-height:14px;color:#3c4043;left:22.5px;transform:translateX(-50%);">3</span>
<span class="t" style="top:350.8px;font-size:13px;line-height:17px;color:#3a3c3f;letter-spacing:0.39px;left:55.6px;">6/9/2025 11:02:25</span>
<span class="t" style="top:350.8px;font-size:13px;line-height:17px;color:#3a3c3f;letter-spacing:-0.057px;left:183.4px;">La Cathedral Cafe</span>
<span class="t" style="top:350.8px;font-size:13px;line-height:17px;color:#3a3c3f;letter-spacing:-0.133px;left:388px;">Gabriel Dela Cruz</span>
<span class="t" style="top:350.8px;font-size:13px;line-height:17px;color:#3a3c3f;letter-spacing:0.218px;left:542.8px;">lacathedralc@gmail.com</span>
<span class="t" style="top:350.8px;font-size:13px;line-height:17px;color:#3a3c3f;letter-spacing:0.257px;left:736.9px;">09774204749</span>
<span class="t" style="top:350.8px;font-size:13px;line-height:17px;color:#3a3c3f;letter-spacing:0.075px;left:886px;">636 Cabildo St, Intramuros, City Of Manila, 1002 Metro Manila</span>
<span class="t" style="top:350.8px;font-size:13px;line-height:17px;color:#3a3c3f;letter-spacing:0.27px;text-decoration:underline;text-underline-offset:1.4px;text-decoration-skip-ink:none;text-decoration-thickness:1px;left:1469px;">https://web.facebook.com/lacathedralcafe/?_rdc=1&amp;_rdr#</span>
<div style="position:absolute;left:0px;top:404px;width:45px;height:1px;background:#c4c7c5;"></div>
<span class="t" style="top:382.3px;font-size:11px;line-height:14px;color:#3c4043;left:22.5px;transform:translateX(-50%);">4</span>
<span class="t" style="top:380.8px;font-size:13px;line-height:17px;color:#3a3c3f;letter-spacing:0.39px;left:55.6px;">6/9/2025 11:05:20</span>
<span class="t" style="top:380.8px;font-size:13px;line-height:17px;color:#3a3c3f;letter-spacing:-0.192px;left:183.4px;">Odd Cafe</span>
<span class="t" style="top:380.8px;font-size:13px;line-height:17px;color:#3a3c3f;letter-spacing:0.056px;left:388px;">Jasper Cazin</span>
<span class="t" style="top:380.8px;font-size:13px;line-height:17px;color:#3a3c3f;letter-spacing:0.164px;left:542.8px;">Contactus@oddcafe.ph</span>
<span class="t" style="top:380.8px;font-size:13px;line-height:17px;color:#3a3c3f;letter-spacing:0.257px;left:736.9px;">09171354701</span>
<span class="t" style="top:380.8px;font-size:13px;line-height:17px;color:#3a3c3f;letter-spacing:0.105px;left:886px;">7th Floor Finman Centre Building 131 Tordesillas Salcedo Village, Makati, Philippines</span>
<span class="t" style="top:380.8px;font-size:13px;line-height:17px;color:#3a3c3f;letter-spacing:0.287px;text-decoration:underline;text-underline-offset:1.4px;text-decoration-skip-ink:none;text-decoration-thickness:1px;left:1469px;">https://web.facebook.com/oddcafeph/?_rdc=1&amp;_rdr#</span>
<div style="position:absolute;left:47px;top:404px;width:1805px;height:30px;background:#f8f9fb;"></div>
<div style="position:absolute;left:0px;top:434px;width:45px;height:1px;background:#c4c7c5;"></div>
<span class="t" style="top:412.3px;font-size:11px;line-height:14px;color:#3c4043;left:22.5px;transform:translateX(-50%);">5</span>
<span class="t" style="top:410.8px;font-size:13px;line-height:17px;color:#3a3c3f;letter-spacing:0.39px;left:55.6px;">6/9/2025 11:09:22</span>
<span class="t" style="top:410.8px;font-size:13px;line-height:17px;color:#3a3c3f;letter-spacing:0.034px;left:183.4px;">Latitude Bean+Bar</span>
<span class="t" style="top:410.8px;font-size:13px;line-height:17px;color:#3a3c3f;letter-spacing:0.004px;left:388px;">Natalie Ong</span>
<span class="t" style="top:410.8px;font-size:13px;line-height:17px;color:#3a3c3f;letter-spacing:0.21px;left:542.8px;">latitudebeanbar@gmail.com</span>
<span class="t" style="top:410.8px;font-size:13px;line-height:17px;color:#3a3c3f;letter-spacing:0.257px;left:736.9px;">09672215545</span>
<span class="t" style="top:410.8px;font-size:13px;line-height:17px;color:#3a3c3f;letter-spacing:0.082px;left:886px;">1851 Pilar Hidalgo Lim St., Malate, Manila, Philippines</span>
<span class="t" style="top:410.8px;font-size:13px;line-height:17px;color:#3a3c3f;letter-spacing:0.265px;text-decoration:underline;text-underline-offset:1.4px;text-decoration-skip-ink:none;text-decoration-thickness:1px;left:1469px;">https://web.facebook.com/latitudebeanbar/?_rdc=1&amp;_rdr#</span>
<div style="position:absolute;left:0px;top:464px;width:45px;height:1px;background:#c4c7c5;"></div>
<span class="t" style="top:442.3px;font-size:11px;line-height:14px;color:#3c4043;left:22.5px;transform:translateX(-50%);">6</span>
<span class="t" style="top:440.8px;font-size:13px;line-height:17px;color:#3a3c3f;letter-spacing:0.39px;left:55.6px;">6/9/2025 11:14:50</span>
<span class="t" style="top:440.8px;font-size:13px;line-height:17px;color:#3a3c3f;letter-spacing:-0.016px;left:183.4px;">Panco Cafe</span>
<span class="t" style="top:440.8px;font-size:13px;line-height:17px;color:#3a3c3f;letter-spacing:0.019px;left:388px;">Shanel Tan</span>
<span class="t" style="top:440.8px;font-size:13px;line-height:17px;color:#3a3c3f;letter-spacing:0.223px;left:542.8px;">pancocafe.ph@gmail.com</span>
<span class="t" style="top:440.8px;font-size:13px;line-height:17px;color:#3a3c3f;letter-spacing:0.257px;left:736.9px;">09432569033</span>
<span class="t" style="top:440.8px;font-size:13px;line-height:17px;color:#3a3c3f;letter-spacing:0.031px;left:886px;">110 Don C. Palanca, Legazpi, Makati, Philippines</span>
<span class="t" style="top:440.8px;font-size:13px;line-height:17px;color:#3a3c3f;letter-spacing:0.269px;text-decoration:underline;text-underline-offset:1.4px;text-decoration-skip-ink:none;text-decoration-thickness:1px;left:1469px;">https://web.facebook.com/pancocafe.ph/?_rdc=1&amp;_rdr#</span>
<div style="position:absolute;left:47px;top:464px;width:1805px;height:30px;background:#f8f9fb;"></div>
<div style="position:absolute;left:0px;top:494px;width:45px;height:1px;background:#c4c7c5;"></div>
<span class="t" style="top:472.3px;font-size:11px;line-height:14px;color:#3c4043;left:22.5px;transform:translateX(-50%);">7</span>
<span class="t" style="top:470.8px;font-size:13px;line-height:17px;color:#3a3c3f;letter-spacing:0.39px;left:55.6px;">6/9/2025 11:16:00</span>
<span class="t" style="top:470.8px;font-size:13px;line-height:17px;color:#3a3c3f;letter-spacing:-0.023px;left:183.4px;">Commune Café + Bar + Roaster</span>
<span class="t" style="top:470.8px;font-size:13px;line-height:17px;color:#3a3c3f;letter-spacing:0.081px;left:388px;">Rosario Juan</span>
<span class="t" style="top:470.8px;font-size:13px;line-height:17px;color:#3a3c3f;letter-spacing:0.194px;left:542.8px;">havecoffee@commune.ph</span>
<span class="t" style="top:470.8px;font-size:13px;line-height:17px;color:#3a3c3f;letter-spacing:0.228px;left:736.9px;">282756324</span>
<span class="t" style="top:470.8px;font-size:13px;line-height:17px;color:#3a3c3f;letter-spacing:0.061px;left:886px;">36 Polaris St., Poblacion, Makati, Philippines</span>
<span class="t" style="top:470.8px;font-size:13px;line-height:17px;color:#3a3c3f;letter-spacing:0.261px;text-decoration:underline;text-underline-offset:1.4px;text-decoration-skip-ink:none;text-decoration-thickness:1px;left:1469px;">https://web.facebook.com/CommunePH/?_rdc=1&amp;_rdr#</span>
<div style="position:absolute;left:0px;top:524px;width:45px;height:1px;background:#c4c7c5;"></div>
<span class="t" style="top:502.3px;font-size:11px;line-height:14px;color:#3c4043;left:22.5px;transform:translateX(-50%);">8</span>
<span class="t" style="top:500.8px;font-size:13px;line-height:17px;color:#3a3c3f;letter-spacing:0.39px;left:55.6px;">6/9/2025 11:18:03</span>
<span class="t" style="top:500.8px;font-size:13px;line-height:17px;color:#3a3c3f;letter-spacing:0.046px;left:183.4px;">Afternoon Cafe + Space</span>
<span class="t" style="top:500.8px;font-size:13px;line-height:17px;color:#3a3c3f;letter-spacing:0.139px;left:388px;">Sofia Malhi</span>
<span class="t" style="top:500.8px;font-size:13px;line-height:17px;color:#3a3c3f;letter-spacing:0.25px;left:546.1999999999999px;">afternooncafeph@gmail.com</span>
<span class="t" style="top:500.8px;font-size:13px;line-height:17px;color:#3a3c3f;letter-spacing:0.257px;left:736.9px;">09985328167</span>
<span class="t" style="top:500.8px;font-size:13px;line-height:17px;color:#3a3c3f;letter-spacing:-0.046px;left:886px;">Global Oil, Rizal Ave Ext, Malabon City</span>
<span class="t" style="top:500.8px;font-size:13px;line-height:17px;color:#3a3c3f;letter-spacing:0.257px;text-decoration:underline;text-underline-offset:1.4px;text-decoration-skip-ink:none;text-decoration-thickness:1px;left:1469px;">https://web.facebook.com/afternooncafeph?_rdc=1&amp;_rdr#</span>
<div style="position:absolute;left:47px;top:524px;width:1805px;height:30px;background:#f8f9fb;"></div>
<div style="position:absolute;left:0px;top:554px;width:45px;height:1px;background:#c4c7c5;"></div>
<span class="t" style="top:532.3px;font-size:11px;line-height:14px;color:#3c4043;left:22.5px;transform:translateX(-50%);">9</span>
<span class="t" style="top:530.8px;font-size:13px;line-height:17px;color:#3a3c3f;letter-spacing:0.39px;left:55.6px;">6/9/2025 11:18:48</span>
<span class="t" style="top:530.8px;font-size:13px;line-height:17px;color:#3a3c3f;letter-spacing:0.047px;left:183.4px;">Tucafe Playhouse</span>
<span class="t" style="top:530.8px;font-size:13px;line-height:17px;color:#3a3c3f;letter-spacing:-0.009px;left:391.5px;">Lance Evangelista</span>
<span class="t" style="top:530.8px;font-size:13px;line-height:17px;color:#3a3c3f;letter-spacing:0.215px;left:546.1999999999999px;">tucafe.ph@gmail.com</span>
<span class="t" style="top:530.8px;font-size:13px;line-height:17px;color:#3a3c3f;letter-spacing:0.257px;left:736.9px;">09927386372</span>
<span class="t" style="top:530.8px;font-size:13px;line-height:17px;color:#3a3c3f;letter-spacing:0.085px;left:886px;">Lower Daffodils St., Modesta Village, San Mateo Rizal</span>
<span class="t" style="top:530.8px;font-size:13px;line-height:17px;color:#3a3c3f;letter-spacing:0.29px;text-decoration:underline;text-underline-offset:1.4px;text-decoration-skip-ink:none;text-decoration-thickness:1px;left:1469px;">https://web.facebook.com/tucafeph/?_rdc=1&amp;_rdr#</span>
<div style="position:absolute;left:0px;top:584px;width:45px;height:1px;background:#c4c7c5;"></div>
<span class="t" style="top:562.3px;font-size:11px;line-height:14px;color:#3c4043;left:22.5px;transform:translateX(-50%);">10</span>
<span class="t" style="top:560.8px;font-size:13px;line-height:17px;color:#3a3c3f;letter-spacing:0.39px;left:55.6px;">6/9/2025 11:20:47</span>
<span class="t" style="top:560.8px;font-size:13px;line-height:17px;color:#3a3c3f;letter-spacing:-0.005px;left:183.4px;">Kamuning Bakery Café</span>
<span class="t" style="top:560.8px;font-size:13px;line-height:17px;color:#3a3c3f;letter-spacing:0.009px;left:388px;">Wilson Lee Flores</span>
<span class="t" style="top:560.8px;font-size:13px;line-height:17px;color:#3a3c3f;letter-spacing:0.19px;left:542.8px;">kamuningbakery@gmail.com</span>
<span class="t" style="top:560.8px;font-size:13px;line-height:17px;color:#3a3c3f;letter-spacing:0.257px;left:736.9px;">09178481818</span>
<span class="t" style="top:560.8px;font-size:13px;line-height:17px;color:#3a3c3f;letter-spacing:0.037px;left:886px;">#43 Judge Jimenez Street corner K-1st Street, Barangay Kamuning, Quezon City, Philippines</span>
<span class="t" style="top:560.8px;font-size:13px;line-height:17px;color:#3a3c3f;letter-spacing:0.255px;text-decoration:underline;text-underline-offset:1.4px;text-decoration-skip-ink:none;text-decoration-thickness:1px;left:1469px;">https://web.facebook.com/kamuningbakery1939/?_rdc=1&amp;_rdr#</span>
<div style="position:absolute;left:47px;top:584px;width:1805px;height:30px;background:#f8f9fb;"></div>
<div style="position:absolute;left:0px;top:614px;width:45px;height:1px;background:#c4c7c5;"></div>
<span class="t" style="top:592.3px;font-size:11px;line-height:14px;color:#3c4043;left:22.5px;transform:translateX(-50%);">11</span>
<span class="t" style="top:590.8px;font-size:13px;line-height:17px;color:#3a3c3f;letter-spacing:0.39px;left:55.6px;">6/9/2025 11:23:41</span>
<span class="t" style="top:590.8px;font-size:13px;line-height:17px;color:#3a3c3f;letter-spacing:0.066px;left:183.4px;">The Curator Coffee &amp; Cocktails</span>
<span class="t" style="top:590.8px;font-size:13px;line-height:17px;color:#3a3c3f;letter-spacing:-0.403px;left:388px;">David Ong</span>
<span class="t" style="top:590.8px;font-size:13px;line-height:17px;color:#3a3c3f;letter-spacing:0.23px;left:542.8px;">thecuratordrinks@gmail.com</span>
<span class="t" style="top:590.8px;font-size:13px;line-height:17px;color:#3a3c3f;letter-spacing:0.257px;left:736.9px;">09163554129</span>
<span class="t" style="top:590.8px;font-size:13px;line-height:17px;color:#3a3c3f;letter-spacing:0.052px;left:886px;">134 Legazpi Street, Makati, Kalakhang Maynila</span>
<span class="t" style="top:590.8px;font-size:13px;line-height:17px;color:#3a3c3f;letter-spacing:0.352px;text-decoration:underline;text-underline-offset:1.4px;text-decoration-skip-ink:none;text-decoration-thickness:1px;left:1469px;">https://web.facebook.com/thecuratorcoffeeandcocktails/?_rdc=1&amp;_rdr#</span>
</div>
<div style="position:absolute;left:46px;top:311px;width:1px;height:304px;background:#3f2a66;"></div>
<div style="position:absolute;left:46px;top:614px;width:1806px;height:1px;background:#3f2a66;"></div>
<div style="position:absolute;left:0px;top:635px;width:45px;height:1px;background:#c4c7c5;"></div>
<div style="position:absolute;left:46px;top:635px;width:1806px;height:1px;background:#e1e1e1;"></div>
<span class="t" style="top:616.7px;font-size:11px;line-height:14px;color:#3c4043;left:22.5px;transform:translateX(-50%);">12</span>
<div style="position:absolute;left:0px;top:656px;width:45px;height:1px;background:#c4c7c5;"></div>
<div style="position:absolute;left:46px;top:656px;width:1806px;height:1px;background:#e1e1e1;"></div>
<span class="t" style="top:637.7px;font-size:11px;line-height:14px;color:#3c4043;left:22.5px;transform:translateX(-50%);">13</span>
<div style="position:absolute;left:0px;top:677px;width:45px;height:1px;background:#c4c7c5;"></div>
<div style="position:absolute;left:46px;top:677px;width:1806px;height:1px;background:#e1e1e1;"></div>
<span class="t" style="top:658.7px;font-size:11px;line-height:14px;color:#3c4043;left:22.5px;transform:translateX(-50%);">14</span>
<div style="position:absolute;left:0px;top:698px;width:45px;height:1px;background:#c4c7c5;"></div>
<div style="position:absolute;left:46px;top:698px;width:1806px;height:1px;background:#e1e1e1;"></div>
<span class="t" style="top:679.7px;font-size:11px;line-height:14px;color:#3c4043;left:22.5px;transform:translateX(-50%);">15</span>
<div style="position:absolute;left:0px;top:719px;width:45px;height:1px;background:#c4c7c5;"></div>
<div style="position:absolute;left:46px;top:719px;width:1806px;height:1px;background:#e1e1e1;"></div>
<span class="t" style="top:700.7px;font-size:11px;line-height:14px;color:#3c4043;left:22.5px;transform:translateX(-50%);">16</span>
<div style="position:absolute;left:0px;top:740px;width:45px;height:1px;background:#c4c7c5;"></div>
<div style="position:absolute;left:46px;top:740px;width:1806px;height:1px;background:#e1e1e1;"></div>
<span class="t" style="top:721.7px;font-size:11px;line-height:14px;color:#3c4043;left:22.5px;transform:translateX(-50%);">17</span>
<div style="position:absolute;left:0px;top:761px;width:45px;height:1px;background:#c4c7c5;"></div>
<div style="position:absolute;left:46px;top:761px;width:1806px;height:1px;background:#e1e1e1;"></div>
<span class="t" style="top:742.7px;font-size:11px;line-height:14px;color:#3c4043;left:22.5px;transform:translateX(-50%);">18</span>
<div style="position:absolute;left:0px;top:782px;width:45px;height:1px;background:#c4c7c5;"></div>
<div style="position:absolute;left:46px;top:782px;width:1806px;height:1px;background:#e1e1e1;"></div>
<span class="t" style="top:763.7px;font-size:11px;line-height:14px;color:#3c4043;left:22.5px;transform:translateX(-50%);">19</span>
<div style="position:absolute;left:0px;top:803px;width:45px;height:1px;background:#c4c7c5;"></div>
<div style="position:absolute;left:46px;top:803px;width:1806px;height:1px;background:#e1e1e1;"></div>
<span class="t" style="top:784.7px;font-size:11px;line-height:14px;color:#3c4043;left:22.5px;transform:translateX(-50%);">20</span>
<div style="position:absolute;left:0px;top:824px;width:45px;height:1px;background:#c4c7c5;"></div>
<div style="position:absolute;left:46px;top:824px;width:1806px;height:1px;background:#e1e1e1;"></div>
<span class="t" style="top:805.7px;font-size:11px;line-height:14px;color:#3c4043;left:22.5px;transform:translateX(-50%);">21</span>
<div style="position:absolute;left:0px;top:845px;width:45px;height:1px;background:#c4c7c5;"></div>
<div style="position:absolute;left:46px;top:845px;width:1806px;height:1px;background:#e1e1e1;"></div>
<span class="t" style="top:826.7px;font-size:11px;line-height:14px;color:#3c4043;left:22.5px;transform:translateX(-50%);">22</span>
<div style="position:absolute;left:0px;top:866px;width:45px;height:1px;background:#c4c7c5;"></div>
<div style="position:absolute;left:46px;top:866px;width:1806px;height:1px;background:#e1e1e1;"></div>
<span class="t" style="top:847.7px;font-size:11px;line-height:14px;color:#3c4043;left:22.5px;transform:translateX(-50%);">23</span>
<div style="position:absolute;left:0px;top:887px;width:45px;height:1px;background:#c4c7c5;"></div>
<div style="position:absolute;left:46px;top:887px;width:1806px;height:1px;background:#e1e1e1;"></div>
<span class="t" style="top:868.7px;font-size:11px;line-height:14px;color:#3c4043;left:22.5px;transform:translateX(-50%);">24</span>
<div style="position:absolute;left:0px;top:908px;width:45px;height:1px;background:#c4c7c5;"></div>
<div style="position:absolute;left:46px;top:908px;width:1806px;height:1px;background:#e1e1e1;"></div>
<span class="t" style="top:889.7px;font-size:11px;line-height:14px;color:#3c4043;left:22.5px;transform:translateX(-50%);">25</span>
<div style="position:absolute;left:0px;top:929px;width:45px;height:1px;background:#c4c7c5;"></div>
<div style="position:absolute;left:46px;top:929px;width:1806px;height:1px;background:#e1e1e1;"></div>
<span class="t" style="top:910.7px;font-size:11px;line-height:14px;color:#3c4043;left:22.5px;transform:translateX(-50%);">26</span>
<span class="t" style="top:931.7px;font-size:11px;line-height:14px;color:#3c4043;left:22.5px;transform:translateX(-50%);">27</span>
<div style="position:absolute;left:174px;top:615px;width:1px;height:332px;background:#e1e1e1;"></div>
<div style="position:absolute;left:379px;top:615px;width:1px;height:332px;background:#e1e1e1;"></div>
<div style="position:absolute;left:534px;top:615px;width:1px;height:332px;background:#e1e1e1;"></div>
<div style="position:absolute;left:728px;top:615px;width:1px;height:332px;background:#e1e1e1;"></div>
<div style="position:absolute;left:877px;top:615px;width:1px;height:332px;background:#e1e1e1;"></div>
<div style="position:absolute;left:1460px;top:615px;width:1px;height:332px;background:#e1e1e1;"></div>
<div style="position:absolute;left:1852px;top:315px;width:1px;height:632px;background:#e1e1e1;"></div>
<div style="position:absolute;left:1855px;top:316px;width:8px;height:25px;background:#dadce0;border-radius:4px"></div>
<div style="position:absolute;left:25px;top:424.5px;width:20.5px;height:20px;background:#fff;border-radius:2px 0 0 2px;box-shadow:0 1px 3px rgba(60,64,67,.35)"></div>
<div style="position:absolute;left:30px;top:434.2px;width:10px;height:1.5px;background:#444746;"></div>
<div style="position:absolute;left:34.25px;top:430px;width:1.5px;height:10px;background:#444746;"></div>
<!-- bottom -->
<div style="position:absolute;left:0px;top:947px;width:1864px;height:12px;background:#fff;"></div>
<div style="position:absolute;left:0px;top:947px;width:46px;height:12px;background:#f8f9fa;"></div>
<div style="position:absolute;left:46px;top:947px;width:1806px;height:1px;background:#e1e1e1;"></div>
<div style="position:absolute;left:48px;top:948px;width:682px;height:9px;background:#dadce0;border-radius:5px"></div>
<div style="position:absolute;left:1853px;top:913px;width:11px;height:34px;background:#f8f9fa;"></div>
<div style="position:absolute;left:1853px;top:913px;width:11px;height:1px;background:#e1e1e1;"></div>
<div style="position:absolute;left:1853px;top:930px;width:11px;height:1px;background:#e1e1e1;"></div>
<svg style="position:absolute;left:1855px;top:919px" width="7" height="4" viewBox="0 0 7 4"><path fill="#80868b" d="M0 4L3.5 0L7 4z"/></svg>
<svg style="position:absolute;left:1855px;top:936.5px" width="7" height="4" viewBox="0 0 7 4"><path fill="#80868b" d="M0 0L3.5 4L7 0z"/></svg>
<div style="position:absolute;left:1821px;top:947px;width:43px;height:12px;background:#f8f9fa;"></div>
<div style="position:absolute;left:1821px;top:947px;width:1px;height:12px;background:#e1e1e1;"></div>
<div style="position:absolute;left:1837px;top:947px;width:1px;height:12px;background:#e1e1e1;"></div>
<div style="position:absolute;left:1852px;top:947px;width:1px;height:12px;background:#e1e1e1;"></div>
<svg style="position:absolute;left:1826px;top:949.5px" width="4" height="7" viewBox="0 0 4 7"><path fill="#80868b" d="M4 0L0 3.5L4 7z"/></svg>
<svg style="position:absolute;left:1843.5px;top:949.5px" width="4" height="7" viewBox="0 0 4 7"><path fill="#80868b" d="M0 0L4 3.5L0 7z"/></svg>
<div style="position:absolute;left:0px;top:959px;width:1893px;height:37px;background:#f9fbfd;"></div>
<div style="position:absolute;left:0px;top:959px;width:1864px;height:1px;background:#e8eaed;"></div>
<svg style="position:absolute;left:52px;top:969px;" width="20" height="20" viewBox="0 0 24 24" ><path fill="#444746" d="M19 13h-6v6h-2v-6H5v-2h6V5h2v6h6v2z"/></svg>
<svg style="position:absolute;left:91.5px;top:969px;" width="20" height="20" viewBox="0 0 24 24" ><path fill="#444746" d="M3 18h18v-2H3v2zm0-5h18v-2H3v2zm0-7v2h18V6H3z"/></svg>
<div style="position:absolute;left:134px;top:960px;width:193px;height:36px;background:#e1e9f7;"></div>
<div style="position:absolute;left:144.5px;top:969.5px;width:18.5px;height:18.5px;background:#8430ce;border-radius:3.5px"></div>
<svg style="position:absolute;left:144.5px;top:969.5px" width="18.5" height="18.5" viewBox="0 0 18.5 18.5" fill="#fff"><rect x="4.3" y="4.7" width="2" height="2"/><rect x="7.6" y="4.7" width="6.8" height="2"/><rect x="4.3" y="8.3" width="2" height="2"/><rect x="7.6" y="8.3" width="6.8" height="2"/><rect x="4.3" y="11.9" width="2" height="2"/><rect x="7.6" y="11.9" width="6.8" height="2"/></svg>
<span class="t" style="top:970.0px;font-size:14px;line-height:18px;color:#0b57d0;font-weight:700;letter-spacing:0.149px;left:169px;">Form Responses 1</span>
<svg style="position:absolute;left:300.8px;top:969px;" width="20" height="20" viewBox="0 0 24 24" ><path fill="#0b57d0" d="M7 10l5 5 5-5z"/></svg>
<div style="position:absolute;left:0px;top:996px;width:1893px;height:1px;background:#b4b4b4;"></div>
<div style="position:absolute;left:0px;top:997px;width:1893px;height:4px;background:#dcd9d9;"></div>
<!-- side panel -->
<svg style="position:absolute;left:1882.5px;top:162.5px" width="19" height="18.5" viewBox="0 0 19 18.5"><rect x="0" y="0" width="19" height="18.5" rx="2" fill="#4285f4"/><rect x="0" y="15" width="19" height="3.5" fill="#34a853"/><rect x="0" y="15" width="3.4" height="3.5" fill="#188038"/><rect x="3.4" y="3.4" width="13" height="11.6" fill="#fff"/></svg>
<span class="t" style="top:165.8px;font-size:9.5px;line-height:12px;color:#4285f4;font-weight:700;left:1888px;">3</span>
<svg style="position:absolute;left:1882.5px;top:218.7px" width="20" height="18.5" viewBox="0 0 20 18.5"><rect width="20" height="18.5" rx="2" fill="#fbbc04"/><circle cx="11.5" cy="8" r="4.3" fill="#fff"/><rect x="9" y="13" width="5" height="1.6" fill="#fff"/></svg>
<svg style="position:absolute;left:1884px;top:275.7px" width="21" height="21" viewBox="0 0 21 21"><circle cx="10.5" cy="10.5" r="9" fill="#fff" stroke="#1a73e8" stroke-width="2.8"/><path d="M6.2 10.5l3.6 3.6 7-7.5" fill="none" stroke="#1a73e8" stroke-width="3.4"/></svg>
<svg style="position:absolute;left:1884.8px;top:331px" width="17.5" height="17.5" viewBox="0 0 20 20"><circle cx="10" cy="5" r="4.6" fill="#1a73e8"/><path d="M0 20v-4c0-3 4.5-5 10-5s10 2 10 5v4z" fill="#1a73e8"/></svg>
<svg style="position:absolute;left:1885.4px;top:386px" width="14" height="19.5" viewBox="0 0 16 23"><path d="M8 0a8 8 0 0 0-8 8c0 2 .8 3.9 2 5.3L8 23l6-9.7A8 8 0 0 0 8 0z" fill="#34a853"/><path d="M8 0a8 8 0 0 0-7 4.2L4.6 7.4 8 0z" fill="#ea4335"/><path d="M1 4.2A8 8 0 0 0 1.4 12.5L5.5 8z" fill="#fbbc04"/><path d="M1.4 12.5L8 23V13z" fill="#4285f4"/><circle cx="8" cy="8" r="2.8" fill="#fff"/></svg>
<div style="position:absolute;left:1881px;top:440px;width:12px;height:1px;background:#dadce0;"></div>
<div style="position:absolute;left:1884.8px;top:483.8px;width:12px;height:2px;background:#1f1f1f;"></div>
<div style="position:absolute;left:1891.3px;top:477.5px;width:2px;height:14.5px;background:#1f1f1f;"></div>
<svg style="position:absolute;left:1889px;top:962.5px" width="8" height="12" viewBox="0 0 8 12" fill="none" stroke="#444746" stroke-width="1.8"><path d="M1 1L6 6L1 11"/></svg>
</body></html>
